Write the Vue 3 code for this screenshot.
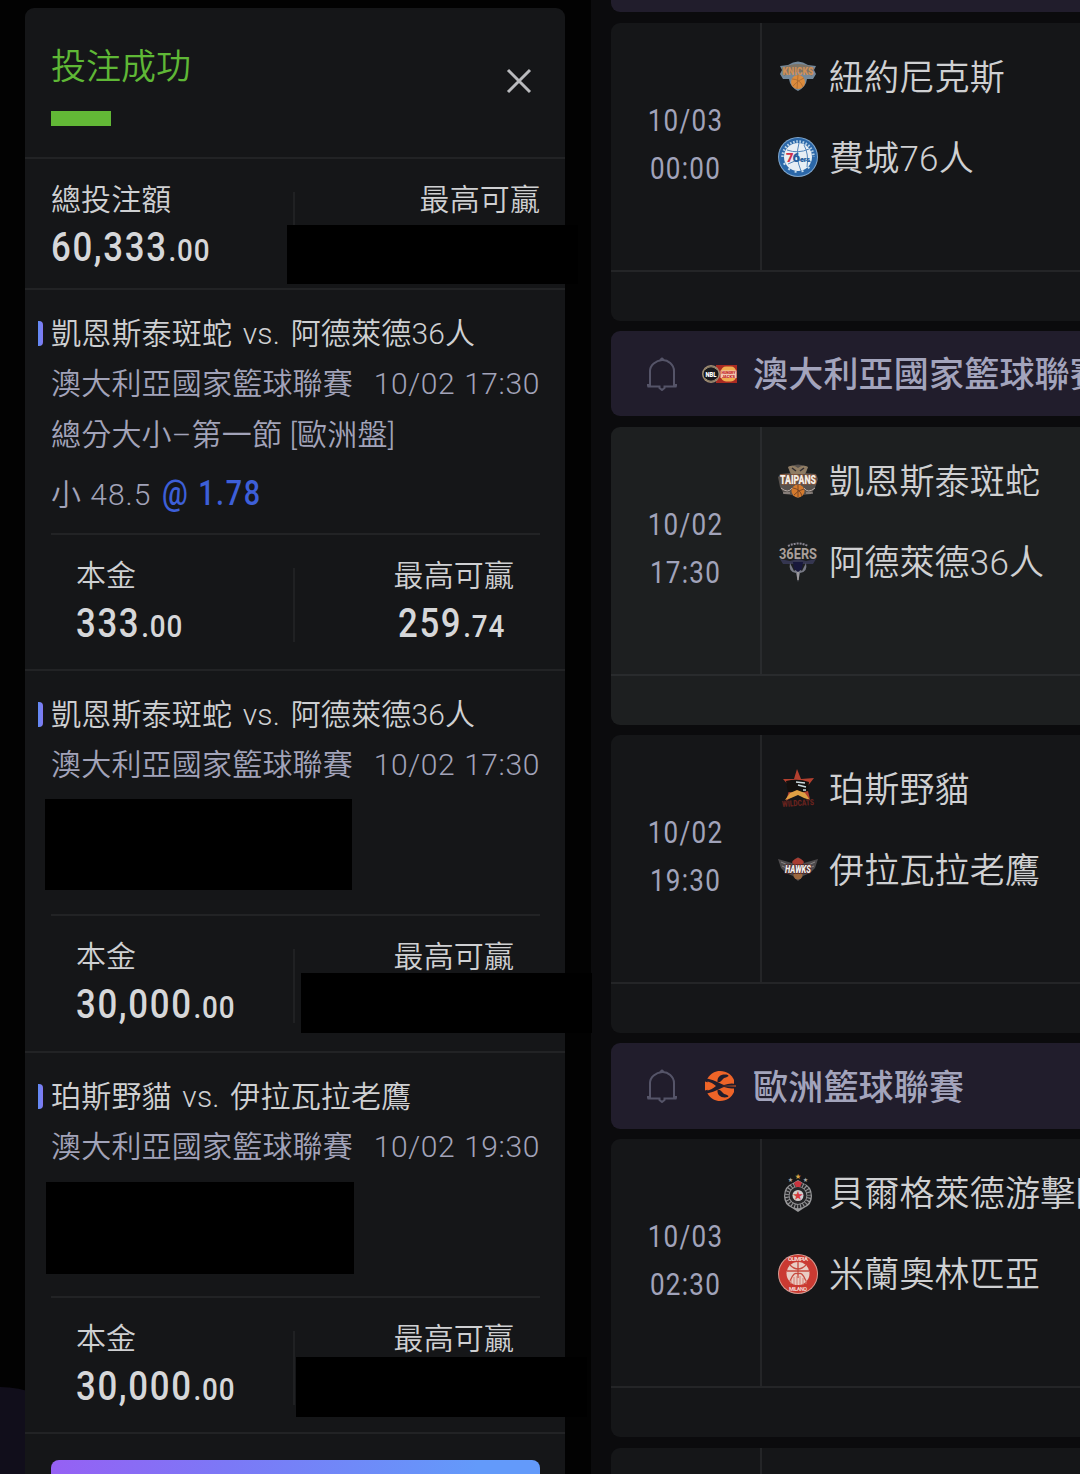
<script setup>
import { ref } from 'vue';

// 注單
const bets = ref([
  {
    match: '凱恩斯泰斑蛇 vs. 阿德萊德36人',
    league: '澳大利亞國家籃球聯賽',
    time: '10/02 17:30',
    market: '總分大小–第一節 [歐洲盤]',
    pick: '小 48.5',
    odds: '@ 1.78',
    stake: ['333', '.00'],
    win: ['259', '.74'],
  },
  {
    match: '凱恩斯泰斑蛇 vs. 阿德萊德36人',
    league: '澳大利亞國家籃球聯賽',
    time: '10/02 17:30',
    mask: 'second',
    stake: ['30,000', '.00'],
  },
  {
    match: '珀斯野貓 vs. 伊拉瓦拉老鷹',
    league: '澳大利亞國家籃球聯賽',
    time: '10/02 19:30',
    mask: 'third',
    stake: ['30,000', '.00'],
  },
]);

// 右側賽事列表
const rows = ref([
  { date: '10/03', time: '00:00', teams: [['knicks', '紐約尼克斯'], ['sixers', '費城76人']] },
  { league: '澳大利亞國家籃球聯賽', logo: 'nbl' },
  { date: '10/02', time: '17:30', active: true, teams: [['taipans', '凱恩斯泰斑蛇'], ['adelaide', '阿德萊德36人']] },
  { date: '10/02', time: '19:30', teams: [['wildcats', '珀斯野貓'], ['hawks', '伊拉瓦拉老鷹']] },
  { league: '歐洲籃球聯賽', logo: 'euro' },
  { date: '10/03', time: '02:30', teams: [['partizan', '貝爾格萊德游擊隊'], ['milano', '米蘭奧林匹亞']] },
  { date: '', time: '', teams: [] },
]);
</script>

<template>
  <div class="page">
    <div class="left">
      <div class="glow"></div>
      <div class="slip">
        <div class="slip-head">
          <div>
            <div class="title">投注成功</div>
            <div class="bar"></div>
          </div>
          <svg class="close" viewBox="0 0 26 26"><path d="M2 2L24 24M24 2L2 24" /></svg>
        </div>

        <div class="summary">
          <div class="cell">
            <div class="label">總投注額</div>
            <div class="amount">60,333<small>.00</small></div>
          </div>
          <div class="split"></div>
          <div class="cell">
            <div class="label">最高可贏</div>
          </div>
          <div class="mask mask-total"></div>
        </div>

        <div v-for="(bet, i) in bets" :key="i" class="bet">
          <div class="match">{{ bet.match }}</div>
          <div class="league">
            <span>{{ bet.league }}</span>
            <span class="when">{{ bet.time }}</span>
          </div>
          <div class="market">{{ bet.market }}</div>
          <div class="pick">{{ bet.pick }}<b class="odds">{{ bet.odds }}</b></div>
          <div class="money">
            <div class="cell">
              <div class="label">本金</div>
              <div class="amount">{{ bet.stake[0] }}<small>{{ bet.stake[1] }}</small></div>
            </div>
            <div class="split"></div>
            <div class="cell">
              <div class="label">最高可贏</div>
              <div v-if="bet.win" class="amount">{{ bet.win[0] }}<small>{{ bet.win[1] }}</small></div>
            </div>
          </div>
          <template v-if="bet.mask">
            <div class="mask" :class="'mask-pick-' + bet.mask"></div>
            <div class="mask" :class="'mask-win-' + bet.mask"></div>
          </template>
        </div>

        <div class="slip-foot">
          <button class="confirm"></button>
        </div>
      </div>
    </div>

    <div class="right">
      <div class="head-tail"></div>
      <template v-for="(row, i) in rows" :key="i">
        <div v-if="row.league" class="league-head">
          <svg class="bell" viewBox="0 0 30 34">
            <path d="M3 29V14C3 8 9 3.500 15 3S27 8 27 14V29M0.500 29.500H12.500V31L15 33L17.500 31V29.500H29.500M1 27V29.500M29 27V29.500M13 3L15 1.500L17 3" />
          </svg>
          <svg v-if="row.logo === 'nbl'" class="league-logo" viewBox="0 0 36 36">
            <path d="M14 9H35V27H14Z" fill="#a92a22" />
            <circle cx="9" cy="18" r="9" fill="#a08d72" />
            <circle cx="9" cy="18" r="7.500" fill="#17191d" />
            <path d="M3 13.500Q9 8 15 13.500M3 22.500Q9 28 15 22.500" fill="none" stroke="#9a8a72" />
            <text x="9" y="21" text-anchor="middle" font-size="8" font-weight="900" fill="#fff" textLength="11" lengthAdjust="spacingAndGlyphs">NBL</text>
            <rect x="19" y="10.500" width="15" height="15" rx="5" fill="#efad51" />
            <path d="M18.500 14.500H34.500V22H18.500Z" fill="#f0c7b2" />
            <text x="26.500" y="18" text-anchor="middle" font-size="4" font-weight="900" fill="#c3221d" textLength="14" lengthAdjust="spacingAndGlyphs">HUNGRY</text>
            <text x="26.500" y="21.700" text-anchor="middle" font-size="4" font-weight="900" fill="#c3221d">JACK'S</text>
          </svg>
          <svg v-else class="league-logo" viewBox="0 0 36 36">
            <path d="M5.500 10.500C9 5 13 3 18 3C25 3 29.500 6.500 32 12V24C29.500 29.500 25 33 18 33C13 33 9 31 5.500 25.500Z" fill="#ee6428" />
            <path d="M3 10.500C11 11 17 15 22 17C26 15.500 30 15 34 16V20C30 21 26 20.500 22 19C17 21 11 25 3 25.500V23C8 22.500 11 20.500 14 18C11 15.500 8 13.500 3 13Z" fill="#211d2c" />
            <path d="M3 13.500Q9 14.500 13 18Q9 21.500 3 22.500Z" fill="#ee6428" />
            <path d="M19 18L34 17.500V18.500Z" fill="#ee6428" />
            <path d="M15.500 14C15 8 20 5.500 26 7C28 9 23 9 21 11C19 13 18 15 15.500 14ZM15.500 22C15 28 20 30.500 26 29C28 27 23 27 21 25C19 23 18 21 15.500 22Z" fill="#211d2c" />
          </svg>
          <span class="league-name">{{ row.league }}</span>
        </div>

        <div v-else class="game" :class="{ active: row.active }">
          <div class="game-main">
            <div class="game-time">
              <div>{{ row.date }}</div>
              <div>{{ row.time }}</div>
            </div>
            <div class="teams">
              <div v-for="team in row.teams" :key="team[0]" class="team">
                <svg v-if="team[0] === 'knicks'" viewBox="0 0 40 40">
                  <path d="M2 10L10 9Q20 2 30 9L38 10L36 14L38 18L35 23L29 23Q28 31 20 35Q12 31 11 23L5 23L2 18L4 14Z" fill="#75899a" />
                  <path d="M4 12Q20 4 36 12L34 20Q20 12 6 20Z" fill="#7d7467" />
                  <text x="20" y="19" text-anchor="middle" font-size="10" font-weight="900" fill="#cf8f56" textLength="31" lengthAdjust="spacingAndGlyphs">KNICKS</text>
                  <circle cx="20" cy="26" r="7" fill="#dc8b3c" />
                  <path d="M14 23Q22 23 25 31M15 30Q20 24 26 22M20 19L19 33" fill="none" stroke="#a76831" stroke-width=".8" />
                </svg>
                <svg v-else-if="team[0] === 'sixers'" viewBox="0 0 40 40">
                  <circle cx="20" cy="20" r="20" fill="#7fa6cc" />
                  <circle cx="20" cy="20" r="19" fill="#2b67a8" />
                  <path d="M4.500 20A15.500 15.500 0 0 1 35.500 20" fill="none" stroke="#b5d0e6" stroke-width="2.500" stroke-dasharray="1.600 1.600" />
                  <path d="M6 26A15.500 15.500 0 0 0 34 26" fill="none" stroke="#c5dced" stroke-width="2" stroke-dasharray="2 5" />
                  <circle cx="20" cy="20" r="14" fill="#e8eef4" />
                  <path d="M9 13Q20 17 31 12M21 6Q17 20 23 34M10 27Q23 20 33 25M26 8Q31 17 29 30" fill="none" stroke="#5285bb" stroke-width="1" />
                  <text x="8" y="25" font-size="13" font-weight="900" fill="#cf3149">7</text>
                  <text x="14.500" y="25" font-size="13" font-weight="900" fill="#285e9e">6</text>
                  <text x="22" y="25" font-size="7" font-weight="900" fill="#285e9e">ers</text>
                </svg>
                <svg v-else-if="team[0] === 'taipans'" viewBox="0 0 40 40">
                  <path d="M10 6Q20 1 30 6L28 12L38 13L40 18L37 27L33 33L25 34L20 37L14 34L6 33L2 26L0 16L3 13L12 12Z" fill="#57514d" />
                  <path d="M10 6Q15 3 20 7Q25 3 30 6L27 13H13Z" fill="#8f7c63" />
                  <path d="M14 7L18 10M26 7L22 10" stroke="#302c31" stroke-width="1.500" />
                  <path d="M3 27Q10 33 14 27M37 27Q30 33 26 27M5 32H12M28 32H35" stroke="#b6aaa5" fill="none" />
                  <circle cx="20" cy="30" r="6.500" fill="#d47a2d" />
                  <path d="M15 27Q22 28 24 35M16 34Q20 29 26 28M20 24V36" fill="none" stroke="#683c23" stroke-width=".8" />
                  <text class="outlined" x="20" y="22.500" text-anchor="middle" font-size="13" font-weight="900" fill="#f3eee8" stroke="#8c5638" stroke-width="1.500" textLength="36" lengthAdjust="spacingAndGlyphs">TAIPANS</text>
                </svg>
                <svg v-else-if="team[0] === 'adelaide'" viewBox="0 0 40 40">
                  <path d="M10 4Q20 -1 30 4" fill="none" stroke="#8b8793" stroke-width="2" stroke-dasharray="2 1" />
                  <path d="M2 17L12 19L20 17L28 19L38 17L35 22H5Z" fill="#353650" />
                  <path d="M12 21Q10 30 18 31L20 40L22 31Q30 30 28 21L24 29L20 26L16 29Z" fill="#777985" />
                  <path d="M15 20H25L24 27L20 30L16 27Z" fill="#18183c" />
                  <path d="M20 30V38" stroke="#c0b7b3" stroke-width="1" />
                  <text x="20" y="16.500" text-anchor="middle" font-size="14" font-weight="700" fill="#aaa09b" textLength="38" lengthAdjust="spacingAndGlyphs">36ERS</text>
                </svg>
                <svg v-else-if="team[0] === 'wildcats'" viewBox="0 0 40 40">
                  <path d="M19 0L23 10L36 9L29 18L32 30L20 24L8 32L12 18L5 10L16 10Z" fill="#b3402f" />
                  <path d="M8 12Q20 9 31 13L30 22L22 24L10 23Z" fill="#13100e" />
                  <path d="M7 31L12 24L19 21L27 24L32 31L26 29L20 26L13 29Z" fill="#dda044" />
                  <path d="M18 13L27 14M20 16L28 18M25 21H28" stroke="#cbd9dd" stroke-width="1.300" />
                  <text x="20" y="37" text-anchor="middle" font-size="8.500" font-weight="900" fill="#69231e" transform="rotate(-4 20 34)" textLength="32" lengthAdjust="spacingAndGlyphs">WILDCATS</text>
                </svg>
                <svg v-else-if="team[0] === 'hawks'" viewBox="0 0 40 40">
                  <path d="M0 9L14 13L20 7L26 13L40 9L37 18L32 23L25 26L20 31L15 26L8 23L3 18Z" fill="#4d4a4c" />
                  <path d="M3 12L12 16M4 16L11 19M37 12L28 16M36 16L29 19" stroke="#8a8585" stroke-width="1" />
                  <path d="M14 12Q20 4 26 12L23 16H17Z" fill="#a83c32" />
                  <circle cx="20" cy="25" r="4.500" fill="#9b6840" />
                  <text class="outlined" x="20" y="23" text-anchor="middle" font-size="11" font-style="italic" font-weight="900" fill="#f2f0ee" stroke="#4c2020" stroke-width="1.500" textLength="26" lengthAdjust="spacingAndGlyphs">HAWKS</text>
                </svg>
                <svg v-else-if="team[0] === 'partizan'" viewBox="0 0 40 40">
                  <text x="20" y="5" text-anchor="middle" font-size="6" fill="#d7a545">★</text>
                  <text x="12.500" y="7.500" text-anchor="middle" font-size="5" fill="#a9a9a9">★</text>
                  <text x="27.500" y="7.500" text-anchor="middle" font-size="5" fill="#a9a9a9">★</text>
                  <path d="M20 7L25 10Q34 13 34 23Q34 32 26 35L20 39L14 35Q6 32 6 23Q6 13 15 10Z" fill="#98989a" />
                  <circle cx="20" cy="22.500" r="11" fill="none" stroke="#29292b" stroke-width="3.500" stroke-dasharray="2 1" />
                  <circle cx="20" cy="22.500" r="8.500" fill="#252527" />
                  <circle cx="20" cy="22.500" r="5.500" fill="#d0cdcc" />
                  <path d="M16 10Q20 6 24 10L22 14H18Z" fill="#c9343e" />
                  <text x="20" y="26.200" text-anchor="middle" font-size="10" fill="#d53a3e">★</text>
                </svg>
                <svg v-else viewBox="0 0 40 40">
                  <circle cx="20" cy="20" r="20" fill="#d99a91" />
                  <circle cx="20" cy="20" r="19" fill="#ca3a32" />
                  <circle cx="20" cy="19.500" r="11.500" fill="#e9cdc4" />
                  <path d="M9 17H31M20 8V24M12 11Q20 19 28 11M12 27Q16 17 20 20Q24 17 28 27" fill="none" stroke="#c74a3e" stroke-width="1.300" />
                  <path d="M13 26V30M16 23V31M19 22V31M22 22V31M25 24V31M28 26V30" stroke="#d77d70" stroke-width="1" />
                  <text x="20" y="7.200" text-anchor="middle" font-size="6" font-weight="700" fill="#f2d7d0" textLength="20">OLIMPIA</text>
                  <text x="20" y="37" text-anchor="middle" font-size="5.500" font-weight="700" fill="#f2d7d0" textLength="18">MILANO</text>
                </svg>
                <span class="team-name">{{ team[1] }}</span>
              </div>
            </div>
          </div>
        </div>
      </template>
    </div>
  </div>
</template>

<style>
body {
  background-color: #0b0b0d;
}
</style>

<style scoped>
.page {
  display: flex;
  width: 1080px;
  height: 1474px;
  overflow: hidden;
  background-color: #0b0b0d;
  color: #cfd0d2;
  font-family: Roboto, "Noto Sans CJK TC", sans-serif;
  font-weight: 350;
}

.left {
  position: relative;
  z-index: 1;
  flex: none;
  box-sizing: border-box;
  width: 591px;
  height: 1474px;
  padding: 8px 26px 0 25px;
  background-color: #020202;
}

.glow {
  position: absolute;
  left: -95px;
  top: 1387px;
  width: 190px;
  height: 190px;
  border-radius: 50%;
  background-color: #110e1b;
}

.slip {
  position: relative;
  width: 540px;
  height: 1466px;
  border-radius: 9px 9px 0 0;
  background-color: #151618;
}

.slip-head {
  display: flex;
  justify-content: space-between;
  box-sizing: border-box;
  height: 151px;
  padding: 34px 33px 0 26px;
  border-bottom: 2px solid #222325;
}

.title {
  color: #5fb836;
  font-size: 35px;
  line-height: 52px;
}

.bar {
  width: 60px;
  height: 15px;
  margin-top: 17px;
  background-color: #62b836;
}

.close {
  width: 26px;
  height: 26px;
  margin-top: 26px;
  fill: none;
  stroke: #b9babd;
  stroke-width: 3;
}

.summary {
  position: relative;
  display: flex;
  box-sizing: border-box;
  height: 131px;
  padding: 18px 25px 0 26px;
  border-bottom: 2px solid #222325;
}

.cell {
  flex: 1;
  display: flex;
  flex-direction: column;
}

.split {
  flex: none;
  width: 2px;
  height: 74px;
  margin: 15px 2px 0 -2px;
  background-color: #202123;
}

.split + .cell {
  align-items: flex-end;
}

.label {
  font-size: 30px;
  line-height: 46px;
  letter-spacing: 0.1px;
}

.amount {
  color: #d6d7d9;
  font-size: 40px;
  font-weight: 500;
  line-height: 49px;
  letter-spacing: 1.9px;
  white-space: nowrap;
  transform: scaleX(0.87);
  transform-origin: left;
}

.split + .cell .amount {
  margin-right: -7px;
}

.amount small {
  margin-left: 1px;
  font-size: 32px;
  letter-spacing: 1px;
}

.bet {
  position: relative;
  box-sizing: border-box;
  height: 381.4px;
  padding: 18px 25px 0 26px;
  border-bottom: 2px solid #222325;
  font-size: 30px;
  letter-spacing: 0.2px;
  white-space: nowrap;
}

.bet::before {
  position: absolute;
  content: '';
  left: 13px;
  top: 31px;
  width: 5px;
  height: 25px;
  border-radius: 0 4px 4px 0;
  background: linear-gradient(90deg, #5f8cf5, #8577f0);
}

.match {
  height: 50px;
  line-height: 51px;
  word-spacing: 3px;
}

.league {
  display: flex;
  justify-content: space-between;
  height: 51px;
  line-height: 51px;
  color: #a2a3b9;
}

.when {
  letter-spacing: 0.6px;
  word-spacing: 1px;
}

.market {
  height: 50px;
  line-height: 51px;
  color: #a2a3b9;
}

.pick {
  height: 74px;
  line-height: 70px;
  color: #a2a3b9;
  letter-spacing: 1px;
}

.odds {
  display: inline-block;
  margin-left: 11px;
  color: #3d5fd8;
  font-size: 35px;
  font-weight: 500;
  letter-spacing: 2px;
  transform: scaleX(0.82);
  transform-origin: left;
}

.money {
  display: flex;
  padding: 18px 26px 0 25px;
  border-top: 2px solid #222325;
}

.money .split {
  margin: 15px 1px 0 -1px;
}

.mask {
  position: absolute;
  background-color: #000;
}

.mask-total {
  left: 262px;
  top: 66px;
  width: 291px;
  height: 59px;
}

.mask-pick-second {
  left: 20px;
  top: 128px;
  width: 307px;
  height: 91px;
}

.mask-win-second {
  left: 276px;
  top: 302px;
  width: 291px;
  height: 60px;
}

.mask-pick-third {
  left: 21px;
  top: 129px;
  width: 308px;
  height: 92px;
}

.mask-win-third {
  left: 271px;
  top: 304px;
  width: 291px;
  height: 60px;
}

.slip-foot {
  padding: 26px 25px 0 26px;
}

.confirm {
  display: block;
  width: 100%;
  height: 80px;
  border: 0;
  border-radius: 8px;
  background: linear-gradient(100deg, #9660f4, #7c78f6 35%, #639afa 85%);
}

.right {
  flex: none;
  display: flex;
  flex-direction: column;
  gap: 10.6px;
  width: 520px;
  margin-left: 20px;
}

.head-tail {
  flex: none;
  height: 12.4px;
  border-radius: 0 0 9px 9px;
  background-color: #211d2c;
}

.league-head {
  flex: none;
  display: flex;
  align-items: center;
  height: 85.3px;
  border-radius: 9px;
  background-color: #211d2c;
}

.bell {
  width: 30px;
  height: 34px;
  margin-left: 36px;
  fill: none;
  stroke: #555468;
  stroke-width: 2;
}

.league-logo {
  width: 36px;
  height: 36px;
  margin: 0 15px 0 25px;
}

.league-name {
  padding-bottom: 4px;
  color: #a3a4bc;
  font-size: 35px;
  font-weight: 500;
  letter-spacing: 0.2px;
  white-space: nowrap;
}

.game {
  flex: none;
  height: 297.6px;
  border-radius: 9px;
  background-color: #151618;
}

.game.active {
  background-color: #1d1f20;
}

.game-main {
  display: flex;
  height: 247px;
  border-bottom: 2px solid #242527;
}

.game.active .game-main,
.game.active .game-time {
  border-color: #292b2d;
}

.game-time {
  flex: none;
  box-sizing: border-box;
  width: 151px;
  padding-top: 74px;
  border-right: 2px solid #242527;
  color: #a1a3ba;
  font-size: 31px;
  font-weight: 450;
  line-height: 48px;
  letter-spacing: 1.5px;
  text-align: center;
}

.game-time div {
  transform: scaleX(0.84);
}

.teams {
  padding: 13px 0 0 16px;
}

.team {
  display: flex;
  align-items: center;
  gap: 11px;
  height: 81px;
  font-size: 35px;
  letter-spacing: 0.2px;
  white-space: nowrap;
}

.team-name {
  padding-bottom: 4px;
}

.team svg {
  flex: none;
  width: 40px;
  height: 40px;
  overflow: visible;
  letter-spacing: 0;
}

.outlined {
  paint-order: stroke;
}
</style>
